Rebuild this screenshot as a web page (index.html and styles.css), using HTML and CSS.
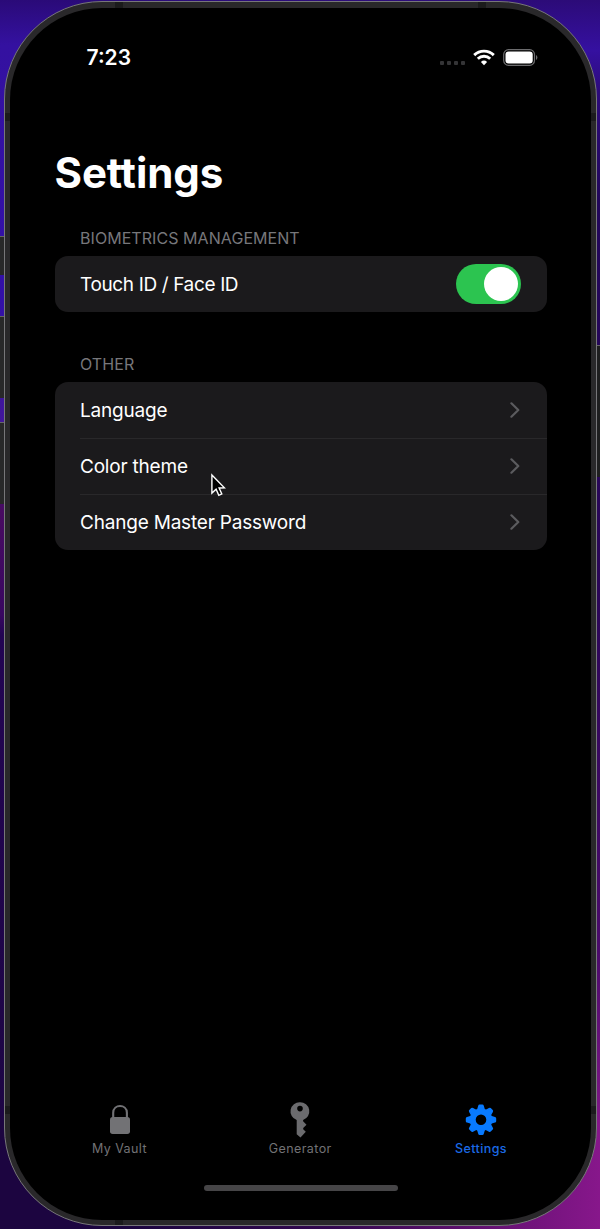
FILE: index.html
```html
<!DOCTYPE html>
<html lang="en">
<head>
<meta charset="utf-8">
<title>Settings</title>
<link rel="stylesheet" href="styles.css">
</head>
<body>
<div class="desktop">
  <i class="side-button action"></i>
  <i class="side-button volume-up"></i>
  <i class="side-button volume-down"></i>
  <i class="side-button power"></i>
  <div class="phone">
    <i class="band top-left"></i><i class="band top-right"></i>
    <i class="band bottom-left"></i>
    <i class="band left-top"></i><i class="band left-bottom"></i>
    <i class="band right-top"></i><i class="band right-bottom"></i>
    <div class="screen">
      <header class="status">
        <span class="time">7:23</span>
        <div class="indicators">
          <span class="dots"><i></i><i></i><i></i><i></i></span>
          <svg class="wifi" width="22" height="17" viewBox="0 0 22 17">
            <g fill="none" stroke="#fff" stroke-width="2.9">
              <path d="M1.2 6.1a14.1 14.1 0 0 1 19.6 0"/>
              <path d="M4.8 9.8a9 9 0 0 1 12.4 0"/>
            </g>
            <path d="M11 16.2 7.9 13a4.5 4.5 0 0 1 6.2 0z" fill="#fff"/>
          </svg>
          <svg class="battery" width="35" height="17" viewBox="0 0 35 17">
            <rect x=".7" y=".7" width="30.8" height="15.6" rx="4.8" fill="none" stroke="#6c6c6e" stroke-width="1.2"/>
            <rect x="2.5" y="2.5" width="27.2" height="12" rx="3" fill="#fff"/>
            <path d="M33 6q1.4.8 1.4 2.5T33 11z" fill="#6c6c6e"/>
          </svg>
        </div>
      </header>
      <main class="content">
        <h1>Settings</h1>
        <h2 class="biometrics-title">BIOMETRICS MANAGEMENT</h2>
        <section class="group">
          <div class="row"><span class="touch-label">Touch ID / Face ID</span><span class="switch"><i></i></span></div>
        </section>
        <h2 class="other-title">OTHER</h2>
        <section class="group">
          <div class="row"><span>Language</span><svg class="chevron" width="10" height="16" viewBox="0 0 10 16"><path d="m1.4 1.3 6.9 6.7-6.9 6.7"/></svg></div>
          <div class="row"><span>Color theme</span><svg class="chevron" width="10" height="16" viewBox="0 0 10 16"><path d="m1.4 1.3 6.9 6.7-6.9 6.7"/></svg></div>
          <div class="row"><span>Change Master Password</span><svg class="chevron" width="10" height="16" viewBox="0 0 10 16"><path d="m1.4 1.3 6.9 6.7-6.9 6.7"/></svg></div>
        </section>
      </main>
      <nav class="tabs">
        <div class="tab">
          <svg width="36" height="38" viewBox="0 0 36 38"><path d="M11.2 17v-5.2c0-9 13.7-9 13.7 0V17" fill="none" stroke="#727275" stroke-width="2.1"/><rect x="8" y="16" width="20" height="17" rx="2.7" fill="#727275"/></svg>
          <span>My Vault</span>
        </div>
        <div class="tab">
          <svg width="36" height="38" viewBox="0 0 36 38"><path fill="#6b6b6e" fill-rule="evenodd" d="M18 1.2a9.2 9.2 0 0 1 3.1 17.9v1.1l3.4 3.5-3.3 3.3v1.2l2.6 2.6-5.3 5.8-3.8-3.3V19.1A9.2 9.2 0 0 1 18 1.2zm0 3.6a2.8 2.8 0 1 0 0 5.6 2.8 2.8 0 0 0 0-5.6z"/></svg>
          <span>Generator</span>
        </div>
        <div class="tab active">
          <svg width="36" height="38" viewBox="0 0 36 38">
            <g fill="#087aff" transform="translate(18 18.8)">
              <g id="teeth"><path id="tooth" d="M-4-10-2.8-14q.3-1.2 1.4-1.2h2.8q1.1 0 1.4 1.2L4-10z"/><use href="#tooth" transform="rotate(90)"/><use href="#tooth" transform="rotate(180)"/><use href="#tooth" transform="rotate(270)"/></g>
              <use href="#teeth" transform="rotate(45)"/>
            </g>
            <circle cx="18" cy="18.8" r="8.3" fill="none" stroke="#087aff" stroke-width="6"/>
          </svg>
          <span>Settings</span>
        </div>
      </nav>
      <i class="home-indicator"></i>
    </div>
  </div>
  <svg class="cursor" width="16" height="25" viewBox="0 0 16 25"><path d="M1.9 1.9v18.2l4.2-3.9 2.7 6.1 3-1.4-2.7-5.9 5.3-.2z" fill="#000" stroke="#fff" stroke-width="1.4"/></svg>
</div>
</body>
</html>
```
FILE: styles.css
```css
* { box-sizing: border-box; }
body { margin: 0; background: #000; font-family: Inter, "Liberation Sans", sans-serif; }
i { display: block; }
svg { display: block; flex: none; }

.desktop {
  position: relative;
  width: 600px;
  height: 1229px;
  padding: 1px 2px 2px 4px;
  overflow: hidden;
  background:
    linear-gradient(90deg, #1c0540 0 130px, #33084f 330px, #87178b) 0 1120px / 600px 109px no-repeat,
    linear-gradient(#2c0b78, #3510a0 50px, #2d0b7c 90px, #22075a 200px, #2b0657 600px, #4b0b6b 950px, #7f1886 1120px) 300px 0 / 300px 1120px no-repeat,
    linear-gradient(#2a0a78, #3411a0 45px, #3210a8 300px, #421799 430px, #480b61 510px, #380760 615px, #220452 635px, #1d0544 1120px);
}

.side-button { position: absolute; background: #282829; border-top: 1px solid #666; }
.action { left: 0; top: 236px; width: 5px; height: 39px; }
.volume-up { left: 0; top: 316px; width: 5px; height: 82px; }
.volume-down { left: 0; top: 422px; width: 5px; height: 82px; }
.power { right: 0; top: 345px; width: 4px; height: 132px; background: #1e1e1f; }

.phone {
  position: relative;
  height: 1225px;
  width: 593px;
  padding: 6px 5px 5px;
  border: 1.3px solid #777679;
  border-radius: 98px;
  background: #29282a;
}
.band { position: absolute; background: #1b1b1c; }
.top-left, .top-right, .bottom-left { width: 8px; height: 6px; }
.top-left { left: 110px; top: 0; }
.top-right { right: 110px; top: 0; }
.bottom-left { left: 110px; bottom: 0; }
.left-top, .left-bottom, .right-top, .right-bottom { width: 5px; height: 8px; }
.left-top { left: 0; top: 111px; }
.left-bottom { left: 0; bottom: 111px; }
.right-top { right: 0; top: 111px; }
.right-bottom { right: 0; bottom: 111px; }

.screen {
  position: relative;
  display: flex;
  flex-direction: column;
  height: 100%;
  padding: 0 44.5px;
  border-radius: 92px;
  background: #000;
}

.status { display: flex; justify-content: space-between; height: 100px; padding: 37px 8.5px 0 32px; color: #fff; }
.time { font-size: 21px; line-height: 26px; font-weight: 600; letter-spacing: 0; }
.indicators { display: flex; padding-top: 4px; }
.dots { display: flex; gap: 3px; padding-top: 12px; margin-right: 8px; }
.dots i { width: 4px; height: 4px; border-radius: 1px; background: #343436; }
.battery { margin-left: 8px; }

.content { flex: 1; }
h1 { margin: 39px 0 0; font-size: 42px; line-height: 52px; font-weight: 700; letter-spacing: -.1px; color: #fff; }
h2 { margin: 0; padding-left: 25.5px; font-size: 16px; line-height: 20px; font-weight: 400; color: #77777b; }
.biometrics-title { margin-top: 29px; letter-spacing: .06px; }
.other-title { margin-top: 42px; letter-spacing: .1px; }
.group { margin-top: 8px; border-radius: 13px; background: #1b1a1c; overflow: hidden; }
.row { display: flex; align-items: center; justify-content: space-between; height: 56px; margin-left: 25.5px; padding-right: 25.6px; font-size: 19px; letter-spacing: -.2px; color: #fff; }
.row + .row { height: 55.8px; border-top: 1px solid #29282a; }
.touch-label { letter-spacing: -.36px; }
.chevron { margin-right: .5px; fill: none; stroke: #5b5b5e; stroke-width: 2.2; stroke-linecap: round; stroke-linejoin: round; }
.switch { display: flex; justify-content: flex-end; width: 65px; height: 40px; padding: 3px; border-radius: 20px; background: #2cc450; }
.switch i { width: 34px; height: 34px; border-radius: 50%; background: #fff; }

.tabs { display: flex; justify-content: space-between; margin: 0 20.5px 27px 20px; }
.tab { width: 90px; display: flex; flex-direction: column; align-items: center; font-size: 12.5px; line-height: 19px; font-weight: 400; letter-spacing: .4px; color: #727275; }
.active { color: #1b6ae5; font-weight: 500; }
.home-indicator { align-self: center; width: 194px; height: 6px; margin-bottom: 29px; border-radius: 3px; background: #464547; }
.cursor { position: absolute; left: 210px; top: 473px; }
```
